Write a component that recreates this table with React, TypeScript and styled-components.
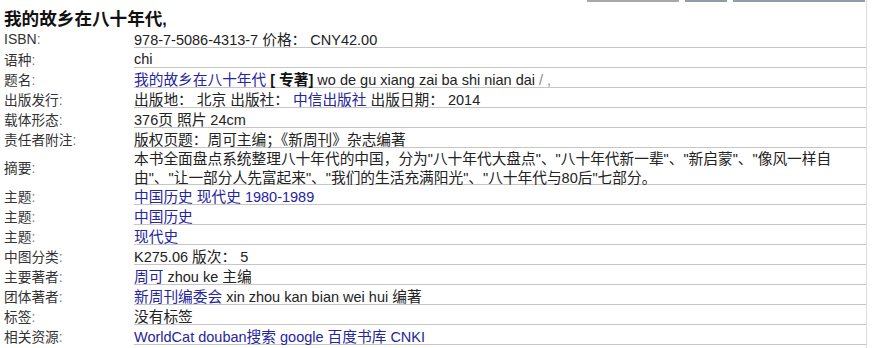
import React from "react";
import styled, { createGlobalStyle } from "styled-components";

const Global = createGlobalStyle`
  html, body { margin: 0; padding: 0; background: #fff; }
  body { font-family: "Liberation Sans", Arial, "Noto Sans CJK SC", sans-serif; font-size: 14.5px; color: #222; }
`;

const Page = styled.div`
  width: 866px;
  height: 348px;
  border-right: 1px solid #dcdcdc;
  overflow: hidden;
`;

const TopStrip = styled.div`
  display: flex;
  justify-content: flex-end;
  gap: 6px;
  height: 2px;
  padding-right: 1px;
`;

const EdgeBar = styled.div<{ $w: number; $c: string }>`
  width: ${(p) => p.$w}px;
  height: 2px;
  background: ${(p) => p.$c};
`;

const Title = styled.h1`
  margin: 0;
  padding: 5px 0 0 4px;
  height: 21px;
  line-height: 21px;
  font-size: 16px;
  font-weight: bold;
  color: #111;
`;

const Table = styled.div`
  display: grid;
  grid-template-columns: 130px 1fr;
  padding-left: 4px;
`;

const Label = styled.div`
  display: flex;
  align-items: center;
  padding-top: 2px;
  color: #333;
  font-size: 14px;
  line-height: 16px;
`;

const Colon = styled.span`
  color: #777;
`;

const Value = styled.div<{ $tall?: boolean }>`
  height: ${(p) => (p.$tall ? 37 : 20)}px;
  box-sizing: border-box;
  padding-top: ${(p) => (p.$tall ? 1 : 3)}px;
  line-height: ${(p) => (p.$tall ? 17 : 16)}px;
  border-bottom: 1px solid #c6c6c6;
  white-space: nowrap;
  color: #222;
`;

const Han = styled.span<{ $px: number }>`
  font-family: "Noto Sans CJK SC", sans-serif;
  font-size: ${(p) => p.$px}px;
`;

const Link = styled.a`
  color: #25259e;
  text-decoration: none;
`;

const Strong = styled.b`
  color: #111;
`;

const Faint = styled.span`
  color: #888;
`;

const CJK = /([\u3000-\u303f\u4e00-\u9fff\uff00-\uffef\u300a\u300b]+)/;

function Mixed({ text, px = 14.7 }: { text: string; px?: number }) {
  const parts = text.split(CJK);
  return (
    <>
      {parts.map((p, i) =>
        p === "" ? null : CJK.test(p) ? (
          <Han key={i} $px={px}>
            {p}
          </Han>
        ) : (
          <React.Fragment key={i}>{p}</React.Fragment>
        )
      )}
    </>
  );
}

type Row = { label: string; value: React.ReactNode; tall?: boolean };

const T = ({ t }: { t: string }) => <Mixed text={t} />;
const L = ({ t }: { t: string }) => (
  <Link href="#">
    <Mixed text={t} />
  </Link>
);

const rows: Row[] = [
  { label: "ISBN", value: <T t="978-7-5086-4313-7 价格： CNY42.00" /> },
  { label: "语种", value: <T t="chi" /> },
  {
    label: "题名",
    value: (
      <>
        <L t="我的故乡在八十年代" /> <Strong>[ <Mixed text="专著" />]</Strong>{" "}
        wo de gu xiang zai ba shi nian dai <Faint>/ ,</Faint>
      </>
    ),
  },
  {
    label: "出版发行",
    value: (
      <>
        <T t="出版地： 北京 出版社： " />
        <L t="中信出版社" />
        <T t=" 出版日期： 2014" />
      </>
    ),
  },
  { label: "载体形态", value: <T t="376页 照片 24cm" /> },
  { label: "责任者附注", value: <T t="版权页题：周可主编；《新周刊》杂志编著" /> },
  {
    label: "摘要",
    tall: true,
    value: (
      <>
        <T t={'本书全面盘点系统整理八十年代的中国，分为"八十年代大盘点"、"八十年代新一辈"、"新启蒙"、"像风一样自'} />
        <br />
        <T t={'由"、"让一部分人先富起来"、"我们的生活充满阳光"、"八十年代与80后"七部分。'} />
      </>
    ),
  },
  { label: "主题", value: <L t="中国历史 现代史 1980-1989" /> },
  { label: "主题", value: <L t="中国历史" /> },
  { label: "主题", value: <L t="现代史" /> },
  { label: "中图分类", value: <T t="K275.06 版次： 5" /> },
  {
    label: "主要著者",
    value: (
      <>
        <L t="周可" /> zhou ke <T t="主编" />
      </>
    ),
  },
  {
    label: "团体著者",
    value: (
      <>
        <L t="新周刊编委会" /> xin zhou kan bian wei hui <T t="编著" />
      </>
    ),
  },
  { label: "标签", value: <T t="没有标签" /> },
  {
    label: "相关资源",
    value: (
      <>
        <L t="WorldCat" /> <L t="douban搜索" /> <L t="google" /> <L t="百度书库" />{" "}
        <L t="CNKI" />
      </>
    ),
  },
];

export default function App() {
  return (
    <Page>
      <Global />
      <TopStrip>
        <EdgeBar $w={92} $c="#a8a8a8" />
        <EdgeBar $w={42} $c="#8e9cab" />
        <EdgeBar $w={132} $c="#8e9cab" />
      </TopStrip>
      <Title>
        <Mixed text="我的故乡在八十年代," px={17.6} />
      </Title>
      <Table>
        {rows.map((r, i) => (
          <React.Fragment key={i}>
            <Label>
              <span>
                <Mixed text={r.label} px={13.7} />
                <Colon>:</Colon>
              </span>
            </Label>
            <Value $tall={r.tall}>{r.value}</Value>
          </React.Fragment>
        ))}
      </Table>
    </Page>
  );
}
